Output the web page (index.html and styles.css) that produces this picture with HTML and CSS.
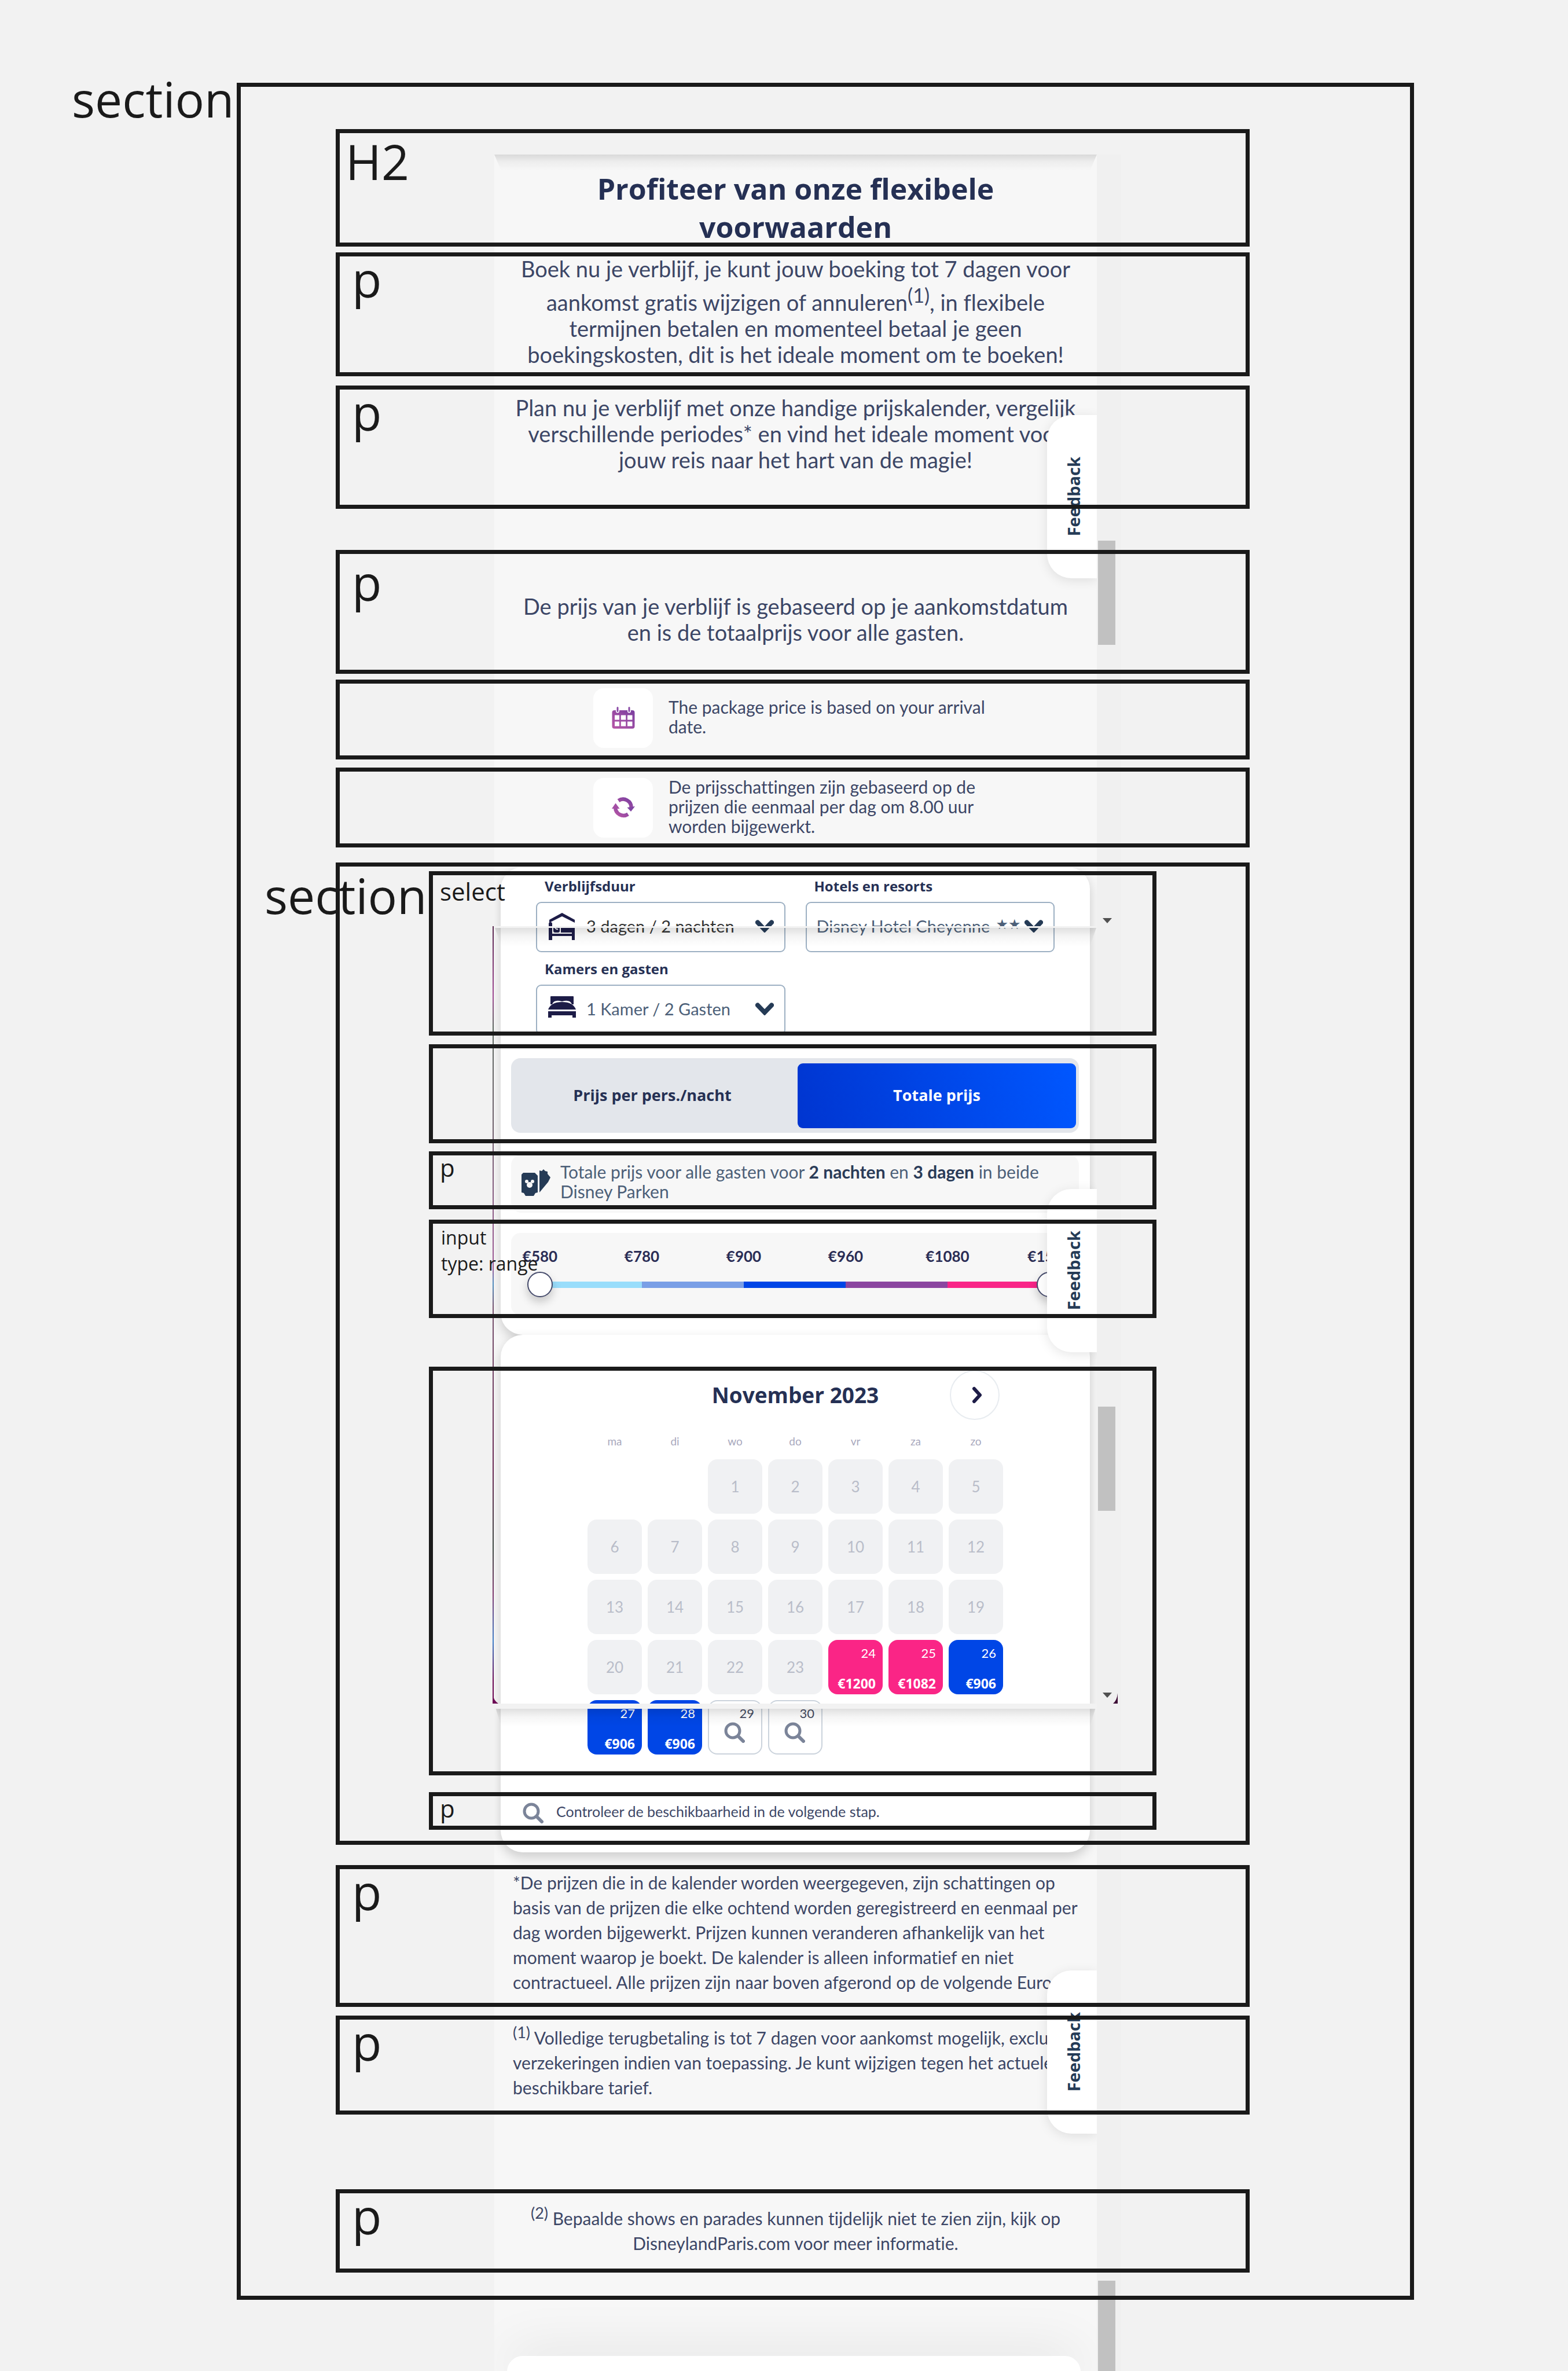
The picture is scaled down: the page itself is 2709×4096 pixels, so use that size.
FILE: index.html
```
<!DOCTYPE html>
<html lang="nl">
<head>
<meta charset="utf-8">
<meta name="viewport" content="width=device-width, initial-scale=1">
<title>Prijskalender – paginastructuur</title>
<link rel="stylesheet" href="styles.css">
</head>
<body>
<svg class="defs" aria-hidden="true">
  <defs>
    <linearGradient id="violet" x1="0" y1="1" x2="1" y2="0">
      <stop offset="0" stop-color="#b856a6"/><stop offset="1" stop-color="#7a3fa0"/>
    </linearGradient>
    <symbol id="chevron" viewBox="0 0 32 22"><path d="M4 4.500 16 17 28 4.500" fill="none" stroke="#253b56" stroke-width="8" stroke-linecap="round"/></symbol>
    <symbol id="search" viewBox="0 0 36 36"><circle cx="15" cy="15" r="12" fill="none" stroke="#7b8499" stroke-width="5"/><path d="M24 24l9 9" stroke="#7b8499" stroke-width="6" stroke-linecap="round"/></symbol>
  </defs>
</svg>

<main class="page">
  <div class="panel" aria-hidden="true"></div>

  <section class="frame outline">
    <span class="tag tag-outer">section</span>

    <div class="box box-title">
      <span class="tag low">H2</span>
      <h2 class="title">Profiteer van onze flexibele<br>voorwaarden</h2>
    </div>

    <div class="box box-terms">
      <span class="tag">p</span>
      <p class="copy">Boek nu je verblijf, je kunt jouw boeking tot 7 dagen voor<br>aankomst gratis wijzigen of annuleren<sup>(1)</sup>, in flexibele<br>termijnen betalen en momenteel betaal je geen<br>boekingskosten, dit is het ideale moment om te boeken!</p>
    </div>

    <div class="box box-plan">
      <span class="tag">p</span>
      <p class="copy">Plan nu je verblijf met onze handige prijskalender, vergelijk<br>verschillende periodes* en vind het ideale moment voor<br>jouw reis naar het hart van de magie!</p>
    </div>

    <div class="box box-basis">
      <span class="tag low">p</span>
      <p class="copy">De prijs van je verblijf is gebaseerd op je aankomstdatum<br>en is de totaalprijs voor alle gasten.</p>
    </div>

    <div class="box box-note first">
      <span class="tile"><svg width="40" height="38" viewBox="0 0 160 150" aria-hidden="true"><path fill="url(#violet)" fill-rule="evenodd" d="M18 23h10v6a12 12 0 0 0 24 0v-6h56v6a12 12 0 0 0 24 0v-6h10q16 0 16 16v95q0 16-16 16H18q-16 0-16-16V39q0-16 16-16zM20 57v32h32V57zM63 57v32h34V57zM108 57v32h34V57zM20 101v32h32v-32zM63 101v32h34v-32zM108 101v32h34v-32z"/><path d="M40 5v24M120 5v24" stroke="#8b4aa6" stroke-width="12" stroke-linecap="round"/></svg></span>
      <p>The package price is based on your arrival<br>date.</p>
    </div>

    <div class="box box-note second">
      <span class="tile"><svg width="40" height="36" viewBox="0 0 160 140" aria-hidden="true"><g fill="none" stroke="url(#violet)" stroke-width="26"><path d="M46 23A56 56 0 0 1 134 72"/><path d="M112 116A56 56 0 0 1 25 68"/></g><path fill="#8145a3" d="M106 70l54-8-28 36z"/><path fill="#a44fa5" d="M0 78l26-38 28 38z"/></svg></span>
      <p>De prijsschattingen zijn gebaseerd op de<br>prijzen die eenmaal per dag om 8.00 uur<br>worden bijgewerkt.</p>
    </div>

    <section class="planner outline">
      <span class="tag tag-inner">section</span>

      <div class="card card-filters">
        <div class="part part-fields outline">
          <span class="tag small tag-select">select</span>
          <div class="fields">
            <div class="field">
              <label for="stay">Verblijfsduur</label>
              <div class="control">
                <svg class="lead" width="50" height="50" viewBox="0 0 50 50" aria-hidden="true"><g fill="#1d1c47"><path d="M3 13 25 1l22 12v5L25 7 3 18z"/><path d="M2 20q0-3 3-3t3 3v17h34V24h5v24h-5v-7H8v7H2z"/><rect x="10" y="24" width="11" height="11" rx="3"/><rect x="23" y="24" width="19" height="11"/></g><path d="M12 25q2 5 6 4" fill="none" stroke="#fff" stroke-width="2"/></svg>
                <select id="stay" class="dark"><option>3 dagen / 2 nachten</option></select>
                <svg class="caret" width="32" height="22" aria-hidden="true"><use href="#chevron"/></svg>
              </div>
            </div>
            <div class="field">
              <label for="hotel">Hotels en resorts</label>
              <div class="control plain">
                <select id="hotel"><option>Disney Hotel Cheyenne</option></select>
                <span class="stars" aria-hidden="true">★★</span>
                <svg class="caret" width="32" height="22" aria-hidden="true"><use href="#chevron"/></svg>
              </div>
            </div>
            <div class="field">
              <label for="rooms">Kamers en gasten</label>
              <div class="control">
                <svg class="lead" width="50" height="50" viewBox="0 0 50 50" aria-hidden="true"><g fill="#1d1c47"><path d="M5 3q0-1 1-1h38q1 0 1 1v13h-3q-3-9-17-5-14-4-17 5H5z"/><path d="M1 25q5-13 24-13t24 13z"/><path d="M1 28h48v11h-6v-4H7v4H1z"/></g></svg>
                <select id="rooms"><option>1 Kamer / 2 Gasten</option></select>
                <svg class="caret" width="32" height="22" aria-hidden="true"><use href="#chevron"/></svg>
              </div>
            </div>
          </div>
        </div>

        <div class="part part-switch outline">
          <div class="switch">
            <button type="button">Prijs per pers./nacht</button>
            <button type="button" class="active" aria-pressed="true">Totale prijs</button>
          </div>
        </div>

        <div class="part part-info outline">
          <span class="tag small">p</span>
          <div class="info">
            <svg width="54" height="48" viewBox="0 0 54 48" aria-hidden="true"><path fill="#253b56" d="M33 3l4 1 3-3 3 3 4 1v4l5 6-4 8-15 18z"/><path fill="#253b56" d="M5 7h20l5 5v29l-4 1-3 5H9l-3-5-4-1V10z"/><g fill="#f7f7f7"><circle cx="11" cy="22" r="3"/><circle cx="21" cy="22" r="3"/><circle cx="16" cy="28" r="5"/></g></svg>
            <p>Totale prijs voor alle gasten voor <b>2 nachten</b> en <b>3 dagen</b> in beide<br>Disney Parken</p>
          </div>
        </div>

        <div class="part part-range outline">
          <span class="tag small tag-range">input<br>type: range</span>
          <div class="range">
            <ul class="prices"><li>€580</li><li>€780</li><li>€900</li><li>€960</li><li>€1080</li><li>€1500</li></ul>
            <div class="track">
              <input type="range" min="0" max="100" value="0" aria-label="Minimumprijs">
              <input type="range" min="0" max="100" value="100" aria-label="Maximumprijs">
            </div>
          </div>
        </div>
      </div>

      <div class="card card-calendar">
        <div class="part part-calendar outline">
          <div class="calendar">
            <header>
              <h3>November 2023</h3>
              <button type="button" class="next" aria-label="Volgende maand"><svg width="18" height="30" viewBox="0 0 18 30" aria-hidden="true"><path d="M4 4l10 11L4 26" fill="none" stroke="#1d1c47" stroke-width="6" stroke-linecap="round" stroke-linejoin="round"/></svg></button>
            </header>
            <table>
              <thead><tr><th>ma</th><th>di</th><th>wo</th><th>do</th><th>vr</th><th>za</th><th>zo</th></tr></thead>
              <tbody>
                <tr><td></td><td></td><td><span class="day">1</span></td><td><span class="day">2</span></td><td><span class="day">3</span></td><td><span class="day">4</span></td><td><span class="day">5</span></td></tr>
                <tr><td><span class="day">6</span></td><td><span class="day">7</span></td><td><span class="day">8</span></td><td><span class="day">9</span></td><td><span class="day">10</span></td><td><span class="day">11</span></td><td><span class="day">12</span></td></tr>
                <tr><td><span class="day">13</span></td><td><span class="day">14</span></td><td><span class="day">15</span></td><td><span class="day">16</span></td><td><span class="day">17</span></td><td><span class="day">18</span></td><td><span class="day">19</span></td></tr>
                <tr><td><span class="day">20</span></td><td><span class="day">21</span></td><td><span class="day">22</span></td><td><span class="day">23</span></td><td><button type="button" class="day priced high">24 <b>€1200</b></button></td><td><button type="button" class="day priced high">25 <b>€1082</b></button></td><td><button type="button" class="day priced">26 <b>€906</b></button></td></tr>
                <tr><td><button type="button" class="day priced">27 <b>€906</b></button></td><td><button type="button" class="day priced">28 <b>€906</b></button></td><td><button type="button" class="day check">29<svg width="36" height="36" aria-hidden="true"><use href="#search"/></svg></button></td><td><button type="button" class="day check">30<svg width="36" height="36" aria-hidden="true"><use href="#search"/></svg></button></td><td></td><td></td><td></td></tr>
              </tbody>
            </table>
          </div>
        </div>

        <div class="part part-hint outline">
          <span class="tag small">p</span>
          <svg width="36" height="36" aria-hidden="true"><use href="#search"/></svg>
          <p>Controleer de beschikbaarheid in de volgende stap.</p>
        </div>
      </div>
    </section>

    <div class="box box-legal">
      <span class="tag">p</span>
      <p class="fine">*De prijzen die in de kalender worden weergegeven, zijn schattingen op<br>basis van de prijzen die elke ochtend worden geregistreerd en eenmaal per<br>dag worden bijgewerkt. Prijzen kunnen veranderen afhankelijk van het<br>moment waarop je boekt. De kalender is alleen informatief en niet<br>contractueel. Alle prijzen zijn naar boven afgerond op de volgende Euro.</p>
    </div>

    <div class="box box-refund">
      <span class="tag">p</span>
      <p class="fine"><sup>(1)</sup> Volledige terugbetaling is tot 7 dagen voor aankomst mogelijk, exclusief<br>verzekeringen indien van toepassing. Je kunt wijzigen tegen het actuele<br>beschikbare tarief.</p>
    </div>

    <div class="box box-shows">
      <span class="tag">p</span>
      <p class="fine center"><sup>(2)</sup> Bepaalde shows en parades kunnen tijdelijk niet te zien zijn, kijk op<br>DisneylandParis.com voor meer informatie.</p>
    </div>
  </section>

  <div class="next-card"></div>

  <div class="seam seam-top"></div>
  <div class="seam seam-mid"></div>
  <div class="seam seam-low"></div>
  <div class="edge"></div>
  <svg class="corner corner-left" width="12" height="18" viewBox="0 0 12 18" aria-hidden="true"><path d="M0 0q1 12 10 18H0z" fill="#6d0b55"/></svg>
  <svg class="corner corner-right" width="8" height="18" viewBox="0 0 8 18" aria-hidden="true"><path d="M8 0Q7 12 0 18h8z" fill="#3d0b35"/></svg>
  <span class="arrow arrow-one"></span>
  <span class="arrow arrow-two"></span>
  <span class="thumb thumb-one"></span>
  <span class="thumb thumb-two"></span>
  <span class="thumb thumb-three"></span>
  <button type="button" class="feedback feedback-one"><span>Feedback</span></button>
  <button type="button" class="feedback feedback-two"><span>Feedback</span></button>
  <button type="button" class="feedback feedback-three"><span>Feedback</span></button>
</main>
</body>
</html>
```
FILE: styles.css
```
:root {
  --ink: #1a1a1a;
  --navy: #253054;
  --text: #3c4666;
  --slate: #4c5f78;
  --line: 7px;
  --body: Lato, "Open Sans", sans-serif;
  --head: "Open Sans", "Noto Sans", sans-serif;
}

* { box-sizing: border-box; }

body {
  margin: 0;
  background: #f2f2f2;
  color: var(--text);
  font-family: var(--body);
  font-variant-ligatures: none;
}

h2, h3, p, ul { margin: 0; padding: 0; }
ul { list-style: none; }
sup { font-size: .9em; vertical-align: .4em; }
button, select { font: inherit; color: inherit; border: 0; background: none; padding: 0; }
svg { flex: none; }
.defs { position: absolute; width: 0; height: 0; }

.page {
  position: relative;
  isolation: isolate;
  overflow: hidden;
  padding: 143px 266px 0 409px;
}

/* Phone screenshot background with its scroll track */
.panel {
  position: absolute;
  z-index: -2;
  top: 267px;
  bottom: 0;
  left: 854px;
  right: 772px;
  border-right: 42px solid #f0f0f0;
  background: #f7f7f7;
}

/* Annotation outlines lie over everything else */
.frame, .planner, .box, .part { position: relative; }
.outline::after, .box::after {
  content: "";
  position: absolute;
  z-index: 5;
  inset: 0;
  border: var(--line) solid var(--ink);
  pointer-events: none;
}

.tag {
  position: absolute;
  z-index: 4;
  top: 4px;
  left: 28px;
  color: var(--ink);
  font: 84px/84px var(--head);
  white-space: nowrap;
}
.tag.low { top: 14px; }
.box-title .tag { left: 17px; }
.tag-outer { top: -14px; left: -285px; }
.tag-inner { top: 15px; left: -123px; }
.tag.small { top: 7px; left: 19px; font-size: 42px; line-height: 42px; }
.tag.small.tag-select { top: 14px; }
.tag.small.tag-range { top: 8px; left: 21px; font-size: 32px; line-height: 45px; }

.frame { padding: 80px 284px 47px 171px; }
.box { padding-left: 274px; padding-right: 264px; }
.box-title { min-height: 203px; padding-top: 70px; }
.box-terms { min-height: 214px; margin-top: 10px; padding-top: 6px; }
.box-plan { min-height: 213px; margin-top: 16px; padding-top: 16px; }
.box-basis { min-height: 214px; margin-top: 71px; padding-top: 75px; }
.box-legal { min-height: 245px; margin-top: 35px; padding-top: 9px; }
.box-refund { min-height: 171px; margin-top: 15px; padding-top: 7px; }
.box-shows { min-height: 144px; margin-top: 129px; padding-top: 19px; }

.title {
  color: var(--navy);
  font: 700 50px/66px var(--head);
  text-align: center;
}
.copy {
  font-size: 38px;
  line-height: 45px;
  text-align: center;
  white-space: nowrap;
}
.fine {
  margin-left: 32px;
  font-size: 30px;
  line-height: 43px;
  white-space: nowrap;
}
.fine.center { margin-left: 0; text-align: center; }

.box-note {
  display: flex;
  align-items: center;
  gap: 27px;
  min-height: 138px;
  margin-top: 10px;
  padding-left: 445px;
  font-size: 30px;
  line-height: 34px;
}
.box-note.first { padding-bottom: 6px; }
.box-note.second { margin-top: 14px; }
.box-note p { padding-bottom: 5px; white-space: nowrap; }
.tile {
  display: flex;
  align-items: center;
  justify-content: center;
  width: 103px;
  height: 103px;
  border-radius: 18px;
  background: #fff;
}

/* Planner */
.planner { min-height: 1697px; margin-top: 26px; padding: 8px 161px 0; }
.card { position: relative; }
.card::before {
  content: "";
  position: absolute;
  z-index: -1;
  inset: 0 115px 0 124px;
  border-radius: 38px;
  background: #fff;
  box-shadow: 0 8px 20px rgba(0, 0, 0, .18);
  clip-path: inset(-10px -12px -30px -11px);
}
.card-filters { padding: 7px 0 29px; }
.card-calendar { min-height: 881px; padding: 55px 0 25px; }
.card-calendar::before { bottom: -13px; }

.part-fields { min-height: 284px; padding: 11px 176px 0 185px; }
.fields { display: grid; grid-template-columns: 1fr 1fr; gap: 14px 35px; }
.field label {
  display: block;
  margin-bottom: 12px;
  padding-left: 15px;
  color: var(--navy);
  font: 700 24px/30px var(--head);
}
.control { position: relative; }
.control select {
  display: block;
  appearance: none;
  width: 100%;
  height: 87px;
  padding: 0 60px 5px 85px;
  border: 2px solid #9db0c3;
  border-radius: 9px;
  color: var(--slate);
  font-size: 29px;
}
.control select.dark { color: #333; }
.control.plain select { padding-left: 17px; }
.lead { position: absolute; left: 20px; top: 18px; }
.caret { position: absolute; right: 20px; top: 31px; }
.stars { position: absolute; left: 329px; top: 24px; color: var(--slate); font: 24px/30px "DejaVu Sans", sans-serif; }

.part-switch { min-height: 171px; margin-top: 15px; padding: 24px 134px 18px 142px; }
.switch {
  display: grid;
  grid-template-columns: 1fr 481px;
  height: 129px;
  padding: 9px 5px 8px;
  border-radius: 16px;
  background: #e3e6eb;
}
.switch button {
  padding: 0 12px 3px 0;
  border-radius: 9px;
  color: var(--navy);
  font: 700 27px/34px var(--head);
}
.switch .active {
  padding-right: 0;
  background: linear-gradient(75deg, #0035d0, #0057ff);
  color: #fff;
}

.part-info { display: flow-root; min-height: 100px; margin-top: 14px; padding: 0 134px 0 142px; }
.info {
  display: flex;
  gap: 15px;
  height: 100px;
  margin: 6px 0 -6px;
  padding: 12px 0 0 16px;
  border-radius: 18px;
  background: #f7f7f7;
  color: var(--slate);
  font-size: 30px;
  line-height: 34px;
  white-space: nowrap;
}
.info svg { margin-top: 12px; }
.info b { color: #2a3b58; }

.part-range { min-height: 170px; margin-top: 18px; padding: 23px 134px 5px 142px; }
.range {
  height: 142px;
  padding-top: 23px;
  border-radius: 16px;
  background: #f7f7f7;
}
.prices {
  display: grid;
  grid-template-columns: repeat(6, 176px);
  margin-left: -38px;
  color: #2a2d55;
  font: 700 26px/34px var(--body);
  text-align: center;
}
.track {
  position: relative;
  width: 880px;
  height: 11px;
  margin: 27px 0 0 50px;
  background: linear-gradient(90deg, #99ddfb 0 20%, #7a9fe6 20% 40%, #0046e6 40% 60%, #8b46a0 60% 80%, #f92588 80%);
}
.track input {
  position: absolute;
  appearance: none;
  left: -22px;
  top: -17px;
  width: 924px;
  height: 44px;
  margin: 0;
  background: none;
  pointer-events: none;
}
.track input::-webkit-slider-thumb {
  appearance: none;
  width: 44px;
  height: 44px;
  border: 2px solid #454a6b;
  border-radius: 50%;
  background: #fff;
  box-shadow: 0 8px 16px rgba(0, 0, 0, .2);
  pointer-events: auto;
}

/* Calendar */
.part-calendar { min-height: 706px; padding-left: 274px; }
.calendar { width: 718px; padding-top: 6px; }
.calendar header {
  display: grid;
  grid-template-columns: 1fr auto 1fr;
  align-items: center;
}
.calendar h3 {
  grid-column: 2;
  color: var(--navy);
  font: 700 37px/50px var(--head);
}
.next {
  display: grid;
  place-items: center;
  justify-self: end;
  width: 86px;
  height: 86px;
  margin-right: 6px;
  border: 2px solid #e8ecf0;
  border-radius: 50%;
  background: #fff;
}
.next svg { margin-left: 8px; }
.calendar table {
  width: 738px;
  margin: 15px -10px 0;
  border-spacing: 10px;
  table-layout: fixed;
}
.calendar th {
  height: 33px;
  padding: 0;
  color: #a9a9bd;
  font: 19px/24px var(--body);
  vertical-align: top;
}
.calendar td { padding: 0; height: 94px; }
.day {
  display: flex;
  align-items: center;
  justify-content: center;
  width: 94px;
  height: 94px;
  border-radius: 16px;
  background: #f0f1f3;
  color: #b9bdc9;
  font-size: 26px;
  line-height: 30px;
}
.day.priced {
  flex-direction: column;
  align-items: flex-end;
  justify-content: space-between;
  padding: 11px 12px 5px;
  background: #0046e6;
  color: #fff;
  font-size: 22px;
  line-height: 24px;
}
.day.priced.high { background: #fa2586; }
.day.priced b { font: 700 23px/28px var(--head); }
.day.check {
  flex-direction: column;
  justify-content: flex-start;
  align-items: flex-end;
  gap: 3px;
  padding: 9px 12px 0;
  border: 2px solid #cbd3dc;
  background: #fff;
  color: #444a60;
  font-size: 22px;
  line-height: 24px;
}
.day.check svg { align-self: flex-start; margin-left: 14px; }

.part-hint {
  display: flex;
  align-items: center;
  gap: 22px;
  min-height: 65px;
  margin-top: 29px;
  padding: 7px 0 0 162px;
  font-size: 25px;
  line-height: 30px;
}
.part-hint p { padding-bottom: 7px; }

/* Next card, cut off by the page end */
.next-card {
  position: relative;
  z-index: -1;
  height: 27px;
  margin: 97px 576px 0 467px;
  border-radius: 36px 36px 0 0;
  background: #fff;
  box-shadow: 0 0 90px rgba(0, 0, 0, .16);
  clip-path: inset(-110px -28px 0 -22px);
}

/* Joins between the stacked captures */
.seam {
  position: absolute;
  z-index: 2;
  left: 854px;
  right: 814px;
  height: 28px;
  background: linear-gradient(rgba(0, 0, 0, .12), rgba(0, 0, 0, .04) 45%, transparent);
  clip-path: polygon(0 0, 100% 0, calc(100% - 12px) 100%, 12px 100%);
}
.seam-top { top: 267px; }
.seam-mid { top: 1600px; height: 35px; border-top: 3px solid #f2f2f2; }
.seam-low { top: 2943px; height: 40px; border-top: 9px solid #f2f2f2; }
.edge {
  position: absolute;
  z-index: 2;
  left: 851px;
  top: 1600px;
  width: 2px;
  height: 1343px;
  background: linear-gradient(#5a2a50, #a04a94 9%, #5f6a62 13%, #70616d 26%, #a05a98 44%, #4f8fc0 46%, #78546f 49%, #6a2a55 70%, #3f4a44 80%, #803a70 86%, #3f7fc8 92%, #6d0b55 97%);
}
.corner { position: absolute; z-index: 2; top: 2925px; }
.corner-left { left: 851px; }
.corner-right { right: 778px; }

.arrow {
  position: absolute;
  z-index: 2;
  right: 788px;
  border: 8px solid transparent;
  border-top: 9px solid #505050;
  border-bottom: 0;
}
.arrow-one { top: 1586px; }
.arrow-two { top: 2924px; }

.thumb { position: absolute; z-index: 2; right: 782px; width: 30px; height: 180px; background: #c1c1c1; }
.thumb-one { top: 934px; }
.thumb-two { top: 2430px; }
.thumb-three { top: 3940px; }

.feedback {
  position: absolute;
  z-index: 3;
  right: 814px;
  display: grid;
  place-items: center;
  width: 86px;
  height: 282px;
  padding-left: 6px;
  border-radius: 42px 0 0 42px;
  background: #fff;
  box-shadow: 0 4px 20px rgba(0, 0, 0, .1);
  clip-path: inset(-30px 0 -30px -30px);
  color: #253b56;
  font: 700 29px/40px var(--head);
}
.feedback span { writing-mode: vertical-rl; transform: rotate(180deg); }
.feedback-one { top: 717px; }
.feedback-two { top: 2054px; }
.feedback-three { top: 3404px; }
```
